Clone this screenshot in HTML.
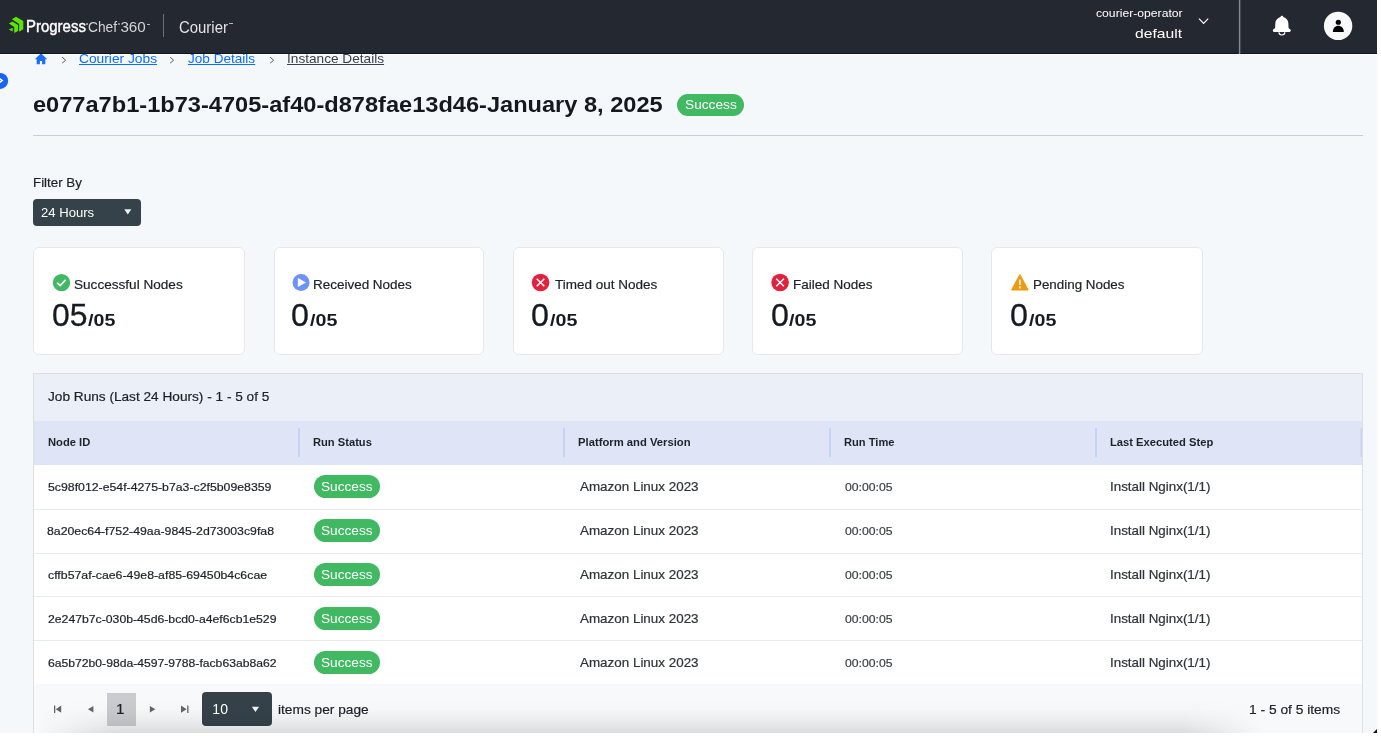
<!DOCTYPE html>
<html lang="en">
<head>
<meta charset="utf-8">
<title>Courier - Instance Details</title>
<style>
*{box-sizing:border-box;margin:0;padding:0}
html,body{width:1381px;height:736px;overflow:hidden;background:#fff}
body{font-family:"Liberation Sans",sans-serif;color:#1c2128;position:relative}
#page{position:absolute;left:0;top:0;width:1377px;height:733px;background:#f5f8fb;overflow:hidden}
#hdr{position:absolute;left:0;top:0;width:1377px;height:54px;background:#242830;border-bottom:1px solid #12151c}
.t{position:absolute;white-space:nowrap;line-height:1;transform-origin:0 0}
.a{position:absolute}
.card{position:absolute;top:247px;width:212px;height:107.7px;background:#fff;border:1px solid #e6e9ec;border-radius:6px}
#tbl{position:absolute;left:33px;top:373px;width:1330px;height:365px;background:#fff;border:1px solid #dcdfe4}
.cap{position:absolute;left:0;top:0;width:1328px;height:47px;background:#ebeff7}
.hd{position:absolute;left:0;top:47px;width:1328px;height:44px;background:#dfe5f6}
.sep{position:absolute;top:54px;width:2px;height:29px;background:#c6d3f2}
.rl{position:absolute;left:0;width:1328px;height:1px;background:#e8eaed}
.pill{position:absolute;left:280px;width:66px;height:23px;background:#40b962;border-radius:12px}
.pg{position:absolute;left:0;top:310px;width:1328px;height:52px;background:#f8f9fa}
.dd{position:absolute;background:#36424a;border-radius:4px}
</style>
</head>
<body>
<div id="page">
  <div class="a" style="left:0;top:54px;width:1377px;height:1px;background:#fdfeff"></div>
  <!-- breadcrumb home icon (partly hidden below header) -->
  <svg class="a" style="left:34px;top:52px" width="14" height="13" viewBox="0 0 14 13"><path d="M7 1.2 L0.8 7.2 L2.7 7.2 L2.7 12.3 L5.9 12.3 L5.9 9 L8.1 9 L8.1 12.3 L11.3 12.3 L11.3 7.2 L13.2 7.2 Z" fill="#1a6dfd"/></svg>
  <svg class="a" style="left:60px;top:55px" width="8" height="10" viewBox="0 0 8 10"><path d="M2.1 2.2 L5.6 5.2 L2.1 8.2" fill="none" stroke="#5a5f66" stroke-width="1"/></svg>
  <svg class="a" style="left:168px;top:55px" width="8" height="10" viewBox="0 0 8 10"><path d="M2.1 2.2 L5.6 5.2 L2.1 8.2" fill="none" stroke="#5a5f66" stroke-width="1"/></svg>
  <svg class="a" style="left:268px;top:55px" width="8" height="10" viewBox="0 0 8 10"><path d="M2.1 2.2 L5.6 5.2 L2.1 8.2" fill="none" stroke="#5a5f66" stroke-width="1"/></svg>

  <div id="hdr">
    <svg class="a" style="left:0;top:0" width="40" height="54" viewBox="0 0 40 54">
      <g fill="#5ce500">
        <path d="M16 16.7 L23.3 20.9 L23.3 29.2 L19.1 31.7 L19.1 23.9 L11.9 19.3 Z"/>
        <path d="M12.4 21.5 L18.1 24.9 L18.1 31 L14.2 33.1 L14.2 27 L8.8 23.6 Z"/>
        <path d="M8.8 29.6 L12.7 27.8 L12.7 31.6 Z"/>
      </g>
    </svg>
    <div class="a" style="left:163px;top:14px;width:1px;height:23px;background:#6d7078"></div>
    <!-- trademark ticks -->
    <div class="a" style="left:86px;top:23px;width:2px;height:2px;border-radius:1px;background:#b9bbbf"></div>
    <div class="a" style="left:118px;top:23px;width:2px;height:2px;border-radius:1px;background:#9fa2a7"></div>
    <div class="a" style="left:146.5px;top:24px;width:3px;height:1px;background:#b5b7bb"></div>
    <div class="a" style="left:229px;top:23px;width:4px;height:1px;background:#b5b7bb"></div>
    <!-- chevron -->
    <svg class="a" style="left:1197px;top:16px" width="13" height="10" viewBox="0 0 13 10"><path d="M2 2.6 L6.6 7.4 L11.2 2.6" fill="none" stroke="#fff" stroke-width="1.2"/></svg>
    <div class="a" style="left:1239px;top:0;width:1px;height:54px;background:#85888e"></div><div class="a" style="left:1240px;top:0;width:1px;height:54px;background:#45484f"></div><div class="a" style="left:1238px;top:0;width:1px;height:54px;background:#2f333b"></div>
    <!-- bell -->
    <svg class="a" style="left:1271px;top:14px" width="22" height="23" viewBox="0 0 22 23"><path d="M10.9 1.7 C11.8 1.7 12.3 2.3 12.3 3.1 C15.4 3.9 17.4 6.4 17.4 9.8 L17.5 13.2 C17.5 14 18 14.6 18.8 15 C19.4 15.3 19.8 15.8 19.8 16.5 C19.8 17.4 19.1 18 18.2 18 L3.4 18 C2.5 18 1.8 17.4 1.8 16.5 C1.8 15.8 2.2 15.3 2.8 15 C3.6 14.6 4.2 14 4.2 13.2 L4.3 9.8 C4.3 6.4 6.4 3.9 9.5 3.1 C9.5 2.3 10 1.7 10.9 1.7 Z" fill="#fff"/><path d="M8 18.3 A2.9 2.7 0 0 0 13.8 18.3" fill="none" stroke="#fff" stroke-width="1.2"/></svg>
    <!-- avatar -->
    <svg class="a" style="left:1323px;top:11px" width="30" height="30" viewBox="0 0 30 30"><circle cx="15.1" cy="14.9" r="14.2" fill="#f8f9fb"/><circle cx="15.3" cy="11.25" r="2.6" fill="#000"/><path d="M9.9 21 C9.9 16.9 12.4 14.75 15.3 14.75 C18.2 14.75 20.8 16.9 20.8 21 Z" fill="#000"/></svg>
  </div>

  <!-- side toggle -->
  <svg class="a" style="left:0;top:72px" width="10" height="18" viewBox="0 0 10 18"><circle cx="0.15" cy="8.9" r="8" fill="#1864fb"/><path d="M-1.2 6 L2.2 8.6 L-1.2 11.2" fill="none" stroke="#fff" stroke-width="1.5"/></svg>

  <!-- title badge -->
  <div class="a" style="left:677px;top:94px;width:67px;height:22px;background:#40b962;border-radius:11px"></div>
  <div class="a" style="left:33px;top:135px;width:1330px;height:1px;background:#c9cdd3"></div>

  <!-- filter dropdown -->
  <div class="dd" style="left:33px;top:199px;width:108px;height:26.5px"></div>
  <svg class="a" style="left:124px;top:209px" width="8" height="6" viewBox="0 0 8 6"><path d="M0.3 0.3 L7.3 0.3 L3.8 5.5 Z" fill="#f1f2f3"/></svg>

  <!-- cards -->
  <div class="card" style="left:33.4px;width:211.2px"></div>
  <div class="card" style="left:273.6px;width:210.7px"></div>
  <div class="card" style="left:513.2px;width:210.7px"></div>
  <div class="card" style="left:752.4px;width:210.5px"></div>
  <div class="card" style="left:991.4px;width:211.2px"></div>
  <!-- card icons -->
  <svg class="a" style="left:52px;top:273px" width="19" height="19" viewBox="0 0 19 19"><circle cx="9.5" cy="9.6" r="8.7" fill="#40b962"/><path d="M5.2 9.8 L8.2 12.6 L13.6 6.9" fill="none" stroke="#fff" stroke-width="1.7"/></svg>
  <svg class="a" style="left:291px;top:273px" width="19" height="19" viewBox="0 0 19 19"><circle cx="10.05" cy="9.55" r="8.5" fill="#6d93f9"/><path d="M6.8 5.1 L15 9.6 L6.8 14.1 Z" fill="#fff"/></svg>
  <svg class="a" style="left:531px;top:273px" width="19" height="19" viewBox="0 0 19 19"><circle cx="9.55" cy="9.5" r="8.8" fill="#e0223e"/><path d="M5.75 5.7 L13.35 13.3 M13.35 5.7 L5.75 13.3" fill="none" stroke="#fff" stroke-width="1.5"/></svg>
  <svg class="a" style="left:770px;top:273px" width="19" height="19" viewBox="0 0 19 19"><circle cx="10.1" cy="9.5" r="8.8" fill="#e0223e"/><path d="M6.3 5.7 L13.9 13.3 M13.9 5.7 L6.3 13.3" fill="none" stroke="#fff" stroke-width="1.5"/></svg>
  <svg class="a" style="left:1010px;top:273px" width="20" height="19" viewBox="0 0 20 19"><path d="M9.9 2 L17.9 16.8 L1.9 16.8 Z" fill="#ec9b13" stroke="#ec9b13" stroke-width="1.4" stroke-linejoin="round"/><path d="M9.9 6.4 L9.9 12" stroke="#fff" stroke-width="1.5"/><circle cx="9.9" cy="14.4" r="1.05" fill="#fff"/></svg>

  <!-- table -->
  <div id="tbl">
    <div class="cap"></div>
    <div class="hd"></div>
    <div class="sep" style="left:264px"></div>
    <div class="sep" style="left:529px"></div>
    <div class="sep" style="left:795px"></div>
    <div class="sep" style="left:1061px"></div>
    <div class="sep" style="left:1326px;background:linear-gradient(90deg,rgba(198,211,242,.45) 50%,#c6d3f2 50%)"></div>
    <div class="rl" style="top:134.5px"></div>
    <div class="rl" style="top:178.5px"></div>
    <div class="rl" style="top:222.4px"></div>
    <div class="rl" style="top:266.3px"></div>
    <div class="pill" style="top:101px"></div>
    <div class="pill" style="top:145px"></div>
    <div class="pill" style="top:189px"></div>
    <div class="pill" style="top:233px"></div>
    <div class="pill" style="top:277px"></div>
    <div class="pg"></div>
  </div>
  <!-- pager -->
  <svg class="a" style="left:53px;top:705px" width="10" height="9" viewBox="0 0 10 9"><path d="M1 0.4 L2.3 0.4 L2.3 7.9 L1 7.9 Z M8.2 0.6 L8.2 7.7 L2.8 4.15 Z" fill="#62666b"/></svg>
  <svg class="a" style="left:87px;top:705px" width="8" height="9" viewBox="0 0 8 9"><path d="M6.4 0.9 L6.4 7.5 L0.9 4.2 Z" fill="#62666b"/></svg>
  <div class="a" style="left:107px;top:693px;width:29px;height:33px;background:#c9cbcf"></div>
  <svg class="a" style="left:149px;top:705px" width="8" height="9" viewBox="0 0 8 9"><path d="M0.9 0.9 L0.9 7.5 L6.3 4.2 Z" fill="#62666b"/></svg>
  <svg class="a" style="left:180px;top:705px" width="10" height="9" viewBox="0 0 10 9"><path d="M7.2 0.4 L8.5 0.4 L8.5 7.9 L7.2 7.9 Z M1 0.6 L1 7.7 L6.6 4.15 Z" fill="#62666b"/></svg>
  <div class="dd" style="left:201.8px;top:692.4px;width:70.1px;height:33.6px"></div>
  <svg class="a" style="left:251px;top:706px" width="9" height="7" viewBox="0 0 9 7"><path d="M0.8 0.7 L8.1 0.7 L4.45 6 Z" fill="#f1f2f3"/></svg>

<div id="tx" style="position:absolute;left:0;top:0;width:1377px;height:733px;will-change:transform">
<span class="t" style="left:25.53px;top:18.79px;font-size:15.6px;color:#ffffff;transform:scaleX(0.9593);-webkit-text-stroke:0.4px #fff">Progress</span>
<span class="t" style="left:88.13px;top:19.13px;font-size:15.2px;color:#d2d4d7;transform:scaleX(0.9071);">Chef</span>
<span class="t" style="left:120.39px;top:19.13px;font-size:15.2px;color:#d2d4d7;">360</span>
<span class="t" style="left:178.90px;top:19.36px;font-size:17.3px;color:#e2e3e5;transform:scaleX(0.8627);">Courier</span>
<span class="t" style="left:1095.58px;top:7.53px;font-size:11.3px;color:#ffffff;transform:scaleX(1.0784);">courier-operator</span>
<span class="t" style="left:1134.99px;top:26.97px;font-size:13.5px;color:#ffffff;transform:scaleX(1.1607);">default</span>
<span class="t" style="left:79.24px;top:52.30px;font-size:13px;color:#0d6efd;transform:scaleX(1.0594);text-decoration:underline;text-underline-offset:1px">Courier Jobs</span>
<span class="t" style="left:188.12px;top:52.30px;font-size:13px;color:#0d6efd;transform:scaleX(1.0444);text-decoration:underline;text-underline-offset:1px">Job Details</span>
<span class="t" style="left:287.30px;top:52.30px;font-size:13px;color:#3c4148;transform:scaleX(1.0492);text-decoration:underline;text-underline-offset:1px">Instance Details</span>
<span class="t" style="left:33.03px;top:94.57px;font-size:21.3px;color:#15191e;font-weight:bold;transform:scaleX(1.1081);">e077a7b1-1b73-4705-af40-d878fae13d46-January 8, 2025</span>
<span class="t" style="left:684.84px;top:98.73px;font-size:12.6px;color:#ffffff;transform:scaleX(1.0870);">Success</span>
<span class="t" style="left:32.83px;top:176.96px;font-size:12.8px;color:#1c2128;transform:scaleX(1.0417);-webkit-text-stroke:0.2px #1c2128;">Filter By</span>
<span class="t" style="left:40.76px;top:207.33px;font-size:12.6px;color:#ffffff;transform:scaleX(1.0385);">24 Hours</span>
<span class="t" style="left:47.97px;top:390.53px;font-size:12.6px;color:#1c2128;transform:scaleX(1.0829);-webkit-text-stroke:0.2px #1c2128;">Job Runs (Last 24 Hours) - 1 - 5 of 5</span>
<span class="t" style="left:47.96px;top:437.13px;font-size:10.6px;color:#1e232a;font-weight:bold;transform:scaleX(1.0568);">Node ID</span>
<span class="t" style="left:313.44px;top:437.13px;font-size:10.6px;color:#1e232a;font-weight:bold;transform:scaleX(1.0526);">Run Status</span>
<span class="t" style="left:578.05px;top:437.13px;font-size:10.6px;color:#1e232a;font-weight:bold;transform:scaleX(1.0626);">Platform and Version</span>
<span class="t" style="left:844.14px;top:437.13px;font-size:10.6px;color:#1e232a;font-weight:bold;transform:scaleX(1.0498);">Run Time</span>
<span class="t" style="left:1109.60px;top:437.13px;font-size:10.6px;color:#1e232a;font-weight:bold;transform:scaleX(1.0562);">Last Executed Step</span>
<span class="t" style="left:47.96px;top:482.12px;font-size:11.2px;color:#1c2128;transform:scaleX(1.0982);-webkit-text-stroke:0.2px #1c2128;">5c98f012-e54f-4275-b7a3-c2f5b09e8359</span>
<span class="t" style="left:321.08px;top:480.93px;font-size:12.6px;color:#ffffff;transform:scaleX(1.0835);">Success</span>
<span class="t" style="left:580.44px;top:481.05px;font-size:12.7px;color:#2e3339;transform:scaleX(1.0572);-webkit-text-stroke:0.2px #2e3339;">Amazon Linux 2023</span>
<span class="t" style="left:845.25px;top:482.32px;font-size:11.2px;color:#3a3f46;transform:scaleX(1.0914);-webkit-text-stroke:0.2px #3a3f46;">00:00:05</span>
<span class="t" style="left:1109.56px;top:481.05px;font-size:12.7px;color:#2e3339;transform:scaleX(1.0550);-webkit-text-stroke:0.2px #2e3339;">Install Nginx(1/1)</span>
<span class="t" style="left:47.28px;top:526.12px;font-size:11.2px;color:#1c2128;transform:scaleX(1.0991);-webkit-text-stroke:0.2px #1c2128;">8a20ec64-f752-49aa-9845-2d73003c9fa8</span>
<span class="t" style="left:321.08px;top:524.93px;font-size:12.6px;color:#ffffff;transform:scaleX(1.0835);">Success</span>
<span class="t" style="left:580.44px;top:525.05px;font-size:12.7px;color:#2e3339;transform:scaleX(1.0572);-webkit-text-stroke:0.2px #2e3339;">Amazon Linux 2023</span>
<span class="t" style="left:845.25px;top:526.32px;font-size:11.2px;color:#3a3f46;transform:scaleX(1.0914);-webkit-text-stroke:0.2px #3a3f46;">00:00:05</span>
<span class="t" style="left:1109.56px;top:525.05px;font-size:12.7px;color:#2e3339;transform:scaleX(1.0550);-webkit-text-stroke:0.2px #2e3339;">Install Nginx(1/1)</span>
<span class="t" style="left:48.25px;top:570.12px;font-size:11.2px;color:#1c2128;transform:scaleX(1.1019);-webkit-text-stroke:0.2px #1c2128;">cffb57af-cae6-49e8-af85-69450b4c6cae</span>
<span class="t" style="left:321.08px;top:568.93px;font-size:12.6px;color:#ffffff;transform:scaleX(1.0835);">Success</span>
<span class="t" style="left:580.44px;top:569.05px;font-size:12.7px;color:#2e3339;transform:scaleX(1.0572);-webkit-text-stroke:0.2px #2e3339;">Amazon Linux 2023</span>
<span class="t" style="left:845.25px;top:570.32px;font-size:11.2px;color:#3a3f46;transform:scaleX(1.0914);-webkit-text-stroke:0.2px #3a3f46;">00:00:05</span>
<span class="t" style="left:1109.56px;top:569.05px;font-size:12.7px;color:#2e3339;transform:scaleX(1.0550);-webkit-text-stroke:0.2px #2e3339;">Install Nginx(1/1)</span>
<span class="t" style="left:47.96px;top:614.12px;font-size:11.2px;color:#1c2128;transform:scaleX(1.0931);-webkit-text-stroke:0.2px #1c2128;">2e247b7c-030b-45d6-bcd0-a4ef6cb1e529</span>
<span class="t" style="left:321.08px;top:612.93px;font-size:12.6px;color:#ffffff;transform:scaleX(1.0835);">Success</span>
<span class="t" style="left:580.44px;top:613.05px;font-size:12.7px;color:#2e3339;transform:scaleX(1.0572);-webkit-text-stroke:0.2px #2e3339;">Amazon Linux 2023</span>
<span class="t" style="left:845.25px;top:614.32px;font-size:11.2px;color:#3a3f46;transform:scaleX(1.0914);-webkit-text-stroke:0.2px #3a3f46;">00:00:05</span>
<span class="t" style="left:1109.56px;top:613.05px;font-size:12.7px;color:#2e3339;transform:scaleX(1.0550);-webkit-text-stroke:0.2px #2e3339;">Install Nginx(1/1)</span>
<span class="t" style="left:47.60px;top:658.12px;font-size:11.2px;color:#1c2128;transform:scaleX(1.0866);-webkit-text-stroke:0.2px #1c2128;">6a5b72b0-98da-4597-9788-facb63ab8a62</span>
<span class="t" style="left:321.08px;top:656.93px;font-size:12.6px;color:#ffffff;transform:scaleX(1.0835);">Success</span>
<span class="t" style="left:580.44px;top:657.05px;font-size:12.7px;color:#2e3339;transform:scaleX(1.0572);-webkit-text-stroke:0.2px #2e3339;">Amazon Linux 2023</span>
<span class="t" style="left:845.25px;top:658.32px;font-size:11.2px;color:#3a3f46;transform:scaleX(1.0914);-webkit-text-stroke:0.2px #3a3f46;">00:00:05</span>
<span class="t" style="left:1109.56px;top:657.05px;font-size:12.7px;color:#2e3339;transform:scaleX(1.0550);-webkit-text-stroke:0.2px #2e3339;">Install Nginx(1/1)</span>
<span class="t" style="left:116.24px;top:702.25px;font-size:14px;color:#1c2128;transform:scaleX(1.0800);-webkit-text-stroke:0.2px #1c2128;">1</span>
<span class="t" style="left:212.36px;top:702.25px;font-size:14px;color:#ffffff;">10</span>
<span class="t" style="left:278.15px;top:702.59px;font-size:13.6px;color:#1c2128;transform:scaleX(1.0082);-webkit-text-stroke:0.2px #1c2128;">items per page</span>
<span class="t" style="left:1249.23px;top:703.09px;font-size:13.6px;color:#1c2128;transform:scaleX(1.0136);-webkit-text-stroke:0.2px #1c2128;">1 - 5 of 5 items</span>
<span class="t" style="left:73.77px;top:277.91px;font-size:13.1px;color:#1c2128;transform:scaleX(1.0370);-webkit-text-stroke:0.2px #1c2128;">Successful Nodes</span>
<span class="t" style="left:52.16px;top:299.50px;font-size:31.3px;color:#161b21;transform:scaleX(1.0200);-webkit-text-stroke:0.3px #161b21">05</span>
<span class="t" style="left:87.85px;top:311.93px;font-size:16.5px;color:#161b21;font-weight:bold;transform:scaleX(1.1900);">/05</span>
<span class="t" style="left:313.10px;top:277.91px;font-size:13.1px;color:#1c2128;transform:scaleX(1.0281);-webkit-text-stroke:0.2px #1c2128;">Received Nodes</span>
<span class="t" style="left:290.72px;top:299.50px;font-size:31.3px;color:#161b21;transform:scaleX(1.0300);-webkit-text-stroke:0.3px #161b21">0</span>
<span class="t" style="left:310.15px;top:311.93px;font-size:16.5px;color:#161b21;font-weight:bold;transform:scaleX(1.1900);">/05</span>
<span class="t" style="left:555.05px;top:277.91px;font-size:13.1px;color:#1c2128;transform:scaleX(1.0307);-webkit-text-stroke:0.2px #1c2128;">Timed out Nodes</span>
<span class="t" style="left:530.72px;top:299.50px;font-size:31.3px;color:#161b21;transform:scaleX(1.0300);-webkit-text-stroke:0.3px #161b21">0</span>
<span class="t" style="left:549.58px;top:311.93px;font-size:16.5px;color:#161b21;font-weight:bold;transform:scaleX(1.1900);">/05</span>
<span class="t" style="left:792.91px;top:277.91px;font-size:13.1px;color:#1c2128;transform:scaleX(1.0317);-webkit-text-stroke:0.2px #1c2128;">Failed Nodes</span>
<span class="t" style="left:770.68px;top:299.50px;font-size:31.3px;color:#161b21;transform:scaleX(1.0300);-webkit-text-stroke:0.3px #161b21">0</span>
<span class="t" style="left:788.73px;top:311.93px;font-size:16.5px;color:#161b21;font-weight:bold;transform:scaleX(1.1900);">/05</span>
<span class="t" style="left:1032.91px;top:277.91px;font-size:13.1px;color:#1c2128;transform:scaleX(1.0218);-webkit-text-stroke:0.2px #1c2128;">Pending Nodes</span>
<span class="t" style="left:1010.49px;top:299.50px;font-size:31.3px;color:#161b21;transform:scaleX(1.0300);-webkit-text-stroke:0.3px #161b21">0</span>
<span class="t" style="left:1028.58px;top:311.93px;font-size:16.5px;color:#161b21;font-weight:bold;transform:scaleX(1.1900);">/05</span>
</div>

  <!-- bottom shadow -->
  <div class="a" style="left:0;top:699px;width:1377px;height:34px;background:linear-gradient(to bottom,rgba(0,0,0,0) 0%,rgba(0,0,0,.012) 30%,rgba(0,0,0,.04) 55%,rgba(0,0,0,.075) 80%,rgba(0,0,0,.112) 100%);-webkit-mask-image:linear-gradient(to right,transparent 38px,rgba(0,0,0,.5) 75px,#000 115px,#000 1185px,rgba(0,0,0,.5) 1225px,transparent 1262px);mask-image:linear-gradient(to right,transparent 38px,rgba(0,0,0,.5) 75px,#000 115px,#000 1185px,rgba(0,0,0,.5) 1225px,transparent 1262px)"></div>
  <svg class="a" style="left:1373px;top:729px" width="4" height="4" viewBox="0 0 4 4"><path d="M4 0 L4 4 L0 4 Z" fill="#111"/></svg>
</div>
</body>
</html>
